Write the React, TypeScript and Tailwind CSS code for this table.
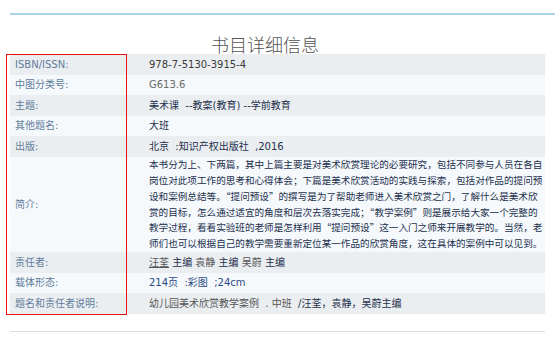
const ROWS: { label: string; value: React.ReactNode; h: string }[] = [
  {
    label: 'ISBN/ISSN:',
    h: 'h-[21px]',
    value: <span className="text-[#3a3a3a]">978-7-5130-3915-4</span>,
  },
  {
    label: '中图分类号:',
    h: 'h-[20px]',
    value: <span className="text-[#6a6a6a]">G613.6</span>,
  },
  {
    label: '主题:',
    h: 'h-[21px]',
    value: <span className="text-[#23304d]">美术课 &nbsp;--教案(教育) --学前教育</span>,
  },
  {
    label: '其他题名:',
    h: 'h-[20px]',
    value: <span className="text-[#23304d]">大班</span>,
  },
  {
    label: '出版:',
    h: 'h-[21px]',
    value: <span className="text-[#23304d]">北京 &nbsp;:知识产权出版社 &nbsp;,2016</span>,
  },
];

const SUMMARY = [
  '本书分为上、下两篇，其中上篇主要是对美术欣赏理论的必要研究，包括不同参与人员在各自',
  '岗位对此项工作的思考和心得体会；下篇是美术欣赏活动的实践与探索，包括对作品的提问预',
  '设和案例总结等。“提问预设”的撰写是为了帮助老师进入美术欣赏之门，了解什么是美术欣',
  '赏的目标，怎么通过适宜的角度和层次去落实完成；“教学案例”则是展示给大家一个完整的',
  '教学过程，看看实验班的老师是怎样利用“提问预设”这一入门之师来开展教学的。当然，老',
  '师们也可以根据自己的教学需要重新定位某一作品的欣赏角度，这在具体的案例中可以见到。',
];

function Row({ label, h, bg, children }: { label: string; h: string; bg: string; children: React.ReactNode }) {
  return (
    <div className={`flex items-center ${h} ${bg}`}>
      <div className="w-[139px] shrink-0 pl-[5px] text-[#5f7c9b]">{label}</div>
      <div className="flex-1">{children}</div>
    </div>
  );
}

export default function App() {
  const gray = 'bg-[#ebeef1]';
  const light = 'bg-[#f5f9fc]';

  return (
    <div className="relative w-[555px] h-[345px] overflow-hidden bg-white font-['DejaVu_Sans','Noto_Sans_CJK_SC',sans-serif] text-[10px] leading-[14px]">
      {/* top rule */}
      <div className="ml-[10px] mt-[13px] h-[2px] bg-[#a9d4e6]" />

      <h1 className="mt-[20px] pr-[25px] text-center font-['Noto_Sans_CJK_SC',sans-serif] text-[18px] leading-[18px] font-light text-[#555]">
        书目详细信息
      </h1>

      <div className="mx-[10px] mt-[1px] flex flex-col">
        {ROWS.map((r, i) => (
          <Row key={r.label} label={r.label} h={r.h} bg={i % 2 === 0 ? gray : light}>
            {r.value}
          </Row>
        ))}

        <Row label="简介:" h="h-[95px]" bg={light}>
          <p className="font-['Noto_Sans_CJK_SC',sans-serif] text-[9.6px] leading-[15.8px] text-[#23304d] whitespace-nowrap">
            {SUMMARY.map((line, i) => (
              <span key={i} className="block">
                {line}
              </span>
            ))}
          </p>
        </Row>

        <Row label="责任者:" h="h-[21px]" bg={gray}>
          <span className="text-[#555] underline">汪荃</span>
          <span className="text-[#23304d]"> 主编 </span>
          <span className="text-[#555]">袁静</span>
          <span className="text-[#23304d]"> 主编 </span>
          <span className="text-[#555]">吴蔚</span>
          <span className="text-[#23304d]"> 主编</span>
        </Row>

        <Row label="载体形态:" h="h-[20px]" bg={light}>
          <span className="text-[#2f4b86]">214页 &nbsp;:彩图 &nbsp;;24cm</span>
        </Row>

        <Row label="题名和责任者说明:" h="h-[21px]" bg={gray}>
          <span className="text-[#555]">幼儿园美术欣赏教学案例 &nbsp;. 中班 &nbsp;</span>
          <span className="text-[#23304d]">/汪荃，袁静，吴蔚主编</span>
        </Row>
      </div>

      <div className="mx-[10px] mt-[17px] h-px bg-[#dedede]" />

      {/* annotation box over the label column */}
      <div className="absolute left-[6px] top-[54px] h-[261px] w-[121px] border border-[#ee1111]" />
    </div>
  );
}
